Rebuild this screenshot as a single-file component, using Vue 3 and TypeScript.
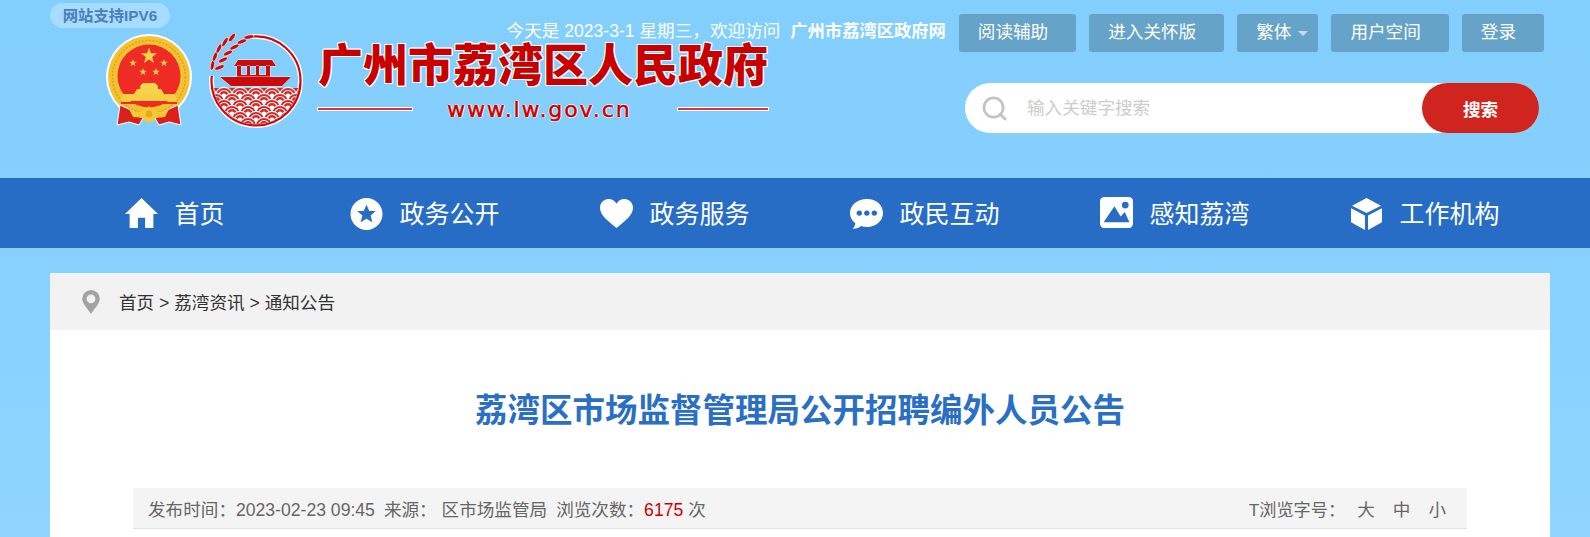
<template>
  <div class="page">
    <header class="header">
      <span class="ipv6">网站支持IPV6</span>
      <div class="brand">
        <!-- national emblem -->
        <svg class="emblem" viewBox="0 0 88 94" width="88" height="94">
          <circle cx="44" cy="44" r="43" fill="#fff" />
          <circle cx="44" cy="44" r="41" fill="#f2c230" />
          <circle cx="44" cy="44" r="36.5" fill="none" stroke="#e0a020" stroke-width="1.5" stroke-dasharray="2 1.5" />
          <circle cx="44" cy="43" r="31.5" fill="#ee2b24" />
          <polygon v-for="s in emblemStars" :key="s.x" :points="star(s.x, s.y, s.r)" fill="#f7d24a" />
          <path d="M29 61h30l-3-5h-3v-3l-3-3H38l-3 3v3h-3z" fill="#f7d24a" />
          <path d="M18 61h52l2 7H16z" fill="#f6cf45" />
          <path d="M16 69h56v2H16z" fill="#ee2b24" />
          <path d="M12 92 15 72l13 6 10 7-4 7-10-3z" fill="#d9201c" stroke="#fff" stroke-width="1" />
          <path d="M76 92 73 72l-13 6-10 7 4 7 10-3z" fill="#d9201c" stroke="#fff" stroke-width="1" />
          <path d="M24 76c8 5 14 4 20-3 6 7 12 8 20 3l-4 8c-6 1-10 0-11 3-2 3-8 3-10 0-1-3-5-2-11-3z" fill="#f6c935" />
          <circle cx="44" cy="81" r="3.4" fill="#e8a81f" />
        </svg>

        <!-- district logo -->
        <svg class="district" viewBox="0 0 95 95" width="95" height="95">
          <defs>
            <clipPath id="waveClip"><circle cx="48" cy="48" r="43" /></clipPath>
          </defs>
          <path d="M44 3.6A44.5 44.5 0 1 1 3.8 43" fill="none" stroke="#fff" stroke-width="5" />
          <path d="M44 3.6A44.5 44.5 0 1 1 3.8 43" fill="none" stroke="#cc0a0a" stroke-width="2.2" />
          <g clip-path="url(#waveClip)">
            <rect x="4" y="55" width="90" height="40" fill="#d42a2a" />
            <g v-for="w in waves" :key="w.id" fill="none">
              <circle :cx="w.x" :cy="w.y" r="8.6" fill="#d42a2a" stroke="#fff" stroke-width="1.2" />
              <circle :cx="w.x" :cy="w.y" r="5.5" stroke="#fff" stroke-width="1.2" />
              <circle :cx="w.x" :cy="w.y" r="2.4" fill="#fff" />
            </g>
          </g>
          <ellipse v-for="g in grains" :key="g.id" :cx="g.x" :cy="g.y" rx="5.2" ry="2" :transform="`rotate(${g.a} ${g.x} ${g.y})`" fill="#cc0a0a" stroke="#fff" stroke-width=".6" />
          <!-- boat -->
          <g class="boat">
            <path d="M26 33l4-6h34l4 6z" />
            <path d="M29 33h4v11h-4zM39 33h3v11h-3zM48 33h3v11h-3zM58 33h4v11h-4zM29 42h33v3H29z" />
            <path d="M12 44h71l-9 9H23z" />
          </g>
        </svg>

        <div class="brand-text">
          <div class="site-name">广州市荔湾区人民政府</div>
          <div class="site-url">
            <i class="rule rule-left"></i>
            <span>www.lw.gov.cn</span>
            <i class="rule rule-right"></i>
          </div>
        </div>
      </div>

      <div class="tools">
        <div class="top-row">
          <span class="welcome">今天是 2023-3-1 星期三，欢迎访问</span>
          <b class="welcome-site">广州市荔湾区政府网</b>
          <div class="btns">
            <a v-for="b in topButtons" :key="b" class="btn">{{ b }}<i v-if="b === '繁体'" class="caret"></i></a>
          </div>
        </div>
        <div class="search">
          <svg class="search-icon" viewBox="0 0 26 26" width="25" height="25">
            <circle cx="12" cy="12" r="10" fill="none" stroke="#c4c4c4" stroke-width="2.8" />
            <path d="M19 19l5 5" stroke="#c4c4c4" stroke-width="3" stroke-linecap="round" />
          </svg>
          <input class="search-input" placeholder="输入关键字搜索" />
          <button class="search-btn">搜索</button>
        </div>
      </div>
    </header>

    <nav class="nav">
      <a v-for="n in navItems" :key="n.label" class="nav-item">
        <svg class="nav-icon" viewBox="0 0 32 32" width="33" height="33" fill="#fff" v-html="n.icon"></svg>
        <span>{{ n.label }}</span>
      </a>
    </nav>

    <main class="card">
      <div class="crumbs">
        <svg class="pin" viewBox="0 0 18 24" width="18" height="24">
          <path fill-rule="evenodd" d="M9 0a8.8 8.8 0 0 1 8.8 8.8C17.800 14 12 19 9 24 6 19 .2 14 .2 8.800A8.800 8.800 0 0 1 9 0zm0 4.400a4.400 4.400 0 1 0 0 8.800 4.400 4.400 0 0 0 0-8.800z" fill="#a3a3a3" />
        </svg>
        <span>首页 &gt; 荔湾资讯 &gt; 通知公告</span>
      </div>
      <h1 class="title">荔湾区市场监督管理局公开招聘编外人员公告</h1>
      <div class="meta">
        <div class="meta-left">
          <span>发布时间：2023-02-23 09:45</span>
          <span>来源： 区市场监管局</span>
          <span>浏览次数：<em>6175</em> 次</span>
        </div>
        <div class="meta-right">
          <span class="size-label">T浏览字号：</span>
          <a>大</a><a>中</a><a>小</a>
        </div>
      </div>
    </main>
  </div>
</template>

<script setup lang="ts">
const topButtons = ['阅读辅助', '进入关怀版', '繁体', '用户空间', '登录']

const navItems = [
  {
    label: '首页',
    icon: '<path d="M16 1 32 16.500h-4.500V30H19.500V20h-7v10H4.500V16.500H0z"/>',
  },
  {
    label: '政务公开',
    icon: '<path fill-rule="evenodd" d="M16 1a15.500 15.500 0 1 1 0 31 15.500 15.500 0 0 1 0-31zm0 6.500-2.700 6H7l5 4.500-1.700 6.500 5.700-3.500 5.700 3.500L20 18l5-4.500h-6.300z"/>',
  },
  {
    label: '政务服务',
    icon: '<path d="M16 30C8 23.500 0 18 0 10.500 0 5.500 3.800 2 8.200 2 11.500 2 14.500 3.800 16 6.500 17.500 3.800 20.500 2 23.800 2 28.200 2 32 5.500 32 10.500 32 18 24 23.500 16 30z"/>',
  },
  {
    label: '政民互动',
    icon: '<path fill-rule="evenodd" d="M16.500 2C25.500 2 32 8 32 15.500S25.500 29 16.500 29c-2 0-4-.3-5.700-.9C9 29.500 6 31 2.500 30.800c1.500-1.300 2.600-3.300 2.700-5.300C2 23 0 19.500 0 15.500 0 8 7.500 2 16.500 2zM9 13a2.600 2.600 0 1 0 0 5.200A2.600 2.600 0 0 0 9 13zm7.300 0a2.600 2.600 0 1 0 0 5.200 2.600 2.600 0 0 0 0-5.200zm7.300 0a2.600 2.600 0 1 0 0 5.200 2.600 2.600 0 0 0 0-5.200z"/>',
  },
  {
    label: '感知荔湾',
    icon: '<path fill-rule="evenodd" d="M4 0h24a4 4 0 0 1 4 4v22a4 4 0 0 1-4 4H4a4 4 0 0 1-4-4V4a4 4 0 0 1 4-4zm20.500 4.500a3.300 3.300 0 1 0 0 6.600 3.300 3.300 0 0 0 0-6.600zM14 9 3.500 24.500h25L24 14.500l-4 4.500z"/>',
  },
  {
    label: '工作机构',
    icon: '<path d="M16 1 30 8.500 16 15.500 2 8.500zM1 11l13.500 7v14L1 24.500zM31 11l-13.500 7v14L31 24.500z"/>',
  },
]

const emblemStars = [
  { x: 44, y: 23, r: 8.5 },
  { x: 28, y: 30, r: 4 },
  { x: 59, y: 30, r: 4 },
  { x: 38, y: 39, r: 4 },
  { x: 51, y: 39, r: 4 },
]

// five pointed star around a centre
const star = (cx: number, cy: number, r: number) => {
  const pts: string[] = []
  for (let i = 0; i < 10; i++) {
    const rad = i % 2 === 0 ? r : r * 0.4
    const a = -Math.PI / 2 + (i * Math.PI) / 5
    pts.push(`${(cx + rad * Math.cos(a)).toFixed(2)},${(cy + rad * Math.sin(a)).toFixed(2)}`)
  }
  return pts.join(' ')
}

// rows of scale shaped waves, drawn top row first so lower rows overlap them
const waves: { id: string; x: number; y: number }[] = []
for (let row = 0; row < 6; row++) {
  const offset = row % 2 === 0 ? 0 : 8
  for (let col = 0; col < 7; col++) {
    waves.push({ id: `${row}-${col}`, x: offset + col * 16, y: 63 + row * 6 })
  }
}

// wheat ear in the upper left of the ring
const grains = [
  { id: 1, x: 4.5, y: 32, a: -80 },
  { id: 2, x: 11.500, y: 34.500, a: -20 },
  { id: 3, x: 7, y: 23.500, a: -70 },
  { id: 4, x: 15, y: 27, a: -25 },
  { id: 5, x: 11, y: 15.500, a: -65 },
  { id: 6, x: 20, y: 20, a: -25 },
  { id: 7, x: 17, y: 9, a: -60 },
  { id: 8, x: 26.500, y: 14, a: -25 },
  { id: 9, x: 24, y: 4.500, a: -55 },
  { id: 10, x: 34, y: 8.500, a: -20 },
  { id: 11, x: 41, y: 4, a: -10 },
]
</script>

<style scoped>
.page {
  position: relative;
  height: 537px;
  display: flex;
  flex-direction: column;
  font-family: "Liberation Sans", "Noto Sans CJK SC", sans-serif;
  background: linear-gradient(180deg, #82cefd 0%, #86d0fe 40%, #8fd5ff 100%);
}

.header {
  height: 178px;
  flex: none;
  display: flex;
  justify-content: space-between;
  padding: 0 46px 0 105px;
}

.ipv6 {
  position: absolute;
  left: 50px;
  top: 3px;
  width: 120px;
  height: 25px;
  line-height: 25px;
  text-align: center;
  border-radius: 13px;
  background: #a6dcff;
  color: #4a7fb9;
  font-size: 15.3px;
  font-weight: 700;
}

.brand {
  flex: none;
  display: flex;
  align-items: flex-start;
  padding-top: 33px;
  /* the welcome line sits above the site name, so the brand may run under the tools */
  margin-right: -400px;
}

.boat {
  fill: #cc0a0a;
  stroke: #fff;
  stroke-width: 0.8;
  paint-order: stroke;
}

.district {
  margin-left: 15px;
}

.brand-text {
  margin-left: 15px;
  width: 452px;
  padding-top: 13px;
}

.site-name {
  height: 42px;
  line-height: 42px;
  font-size: 45px;
  font-weight: 900;
  color: #c80000;
  white-space: nowrap;
  text-shadow: 1px 0 #fff, -1px 0 #fff, 0 1px #fff, 0 -1px #fff, 1px 1px #fff, -1px -1px #fff, 1px -1px #fff, -1px 1px #fff;
}

.site-url {
  display: flex;
  align-items: center;
  height: 30px;
  margin-top: 6px;
}

.site-url span {
  margin-left: 35px;
  width: 231px;
  font-family: "DejaVu Sans", sans-serif;
  font-size: 22px;
  letter-spacing: 1.9px;
  color: #c80000;
  -webkit-text-stroke: 0.5px #c80000;
  text-shadow: 1px 0 #fff, -1px 0 #fff, 0 1px #fff, 0 -1px #fff;
}

.rule {
  height: 2px;
  background: #d23a3a;
  box-shadow: 0 0 0 1px #fff;
}

.rule-left {
  width: 94px;
}

.rule-right {
  width: 90px;
}

.tools {
  display: flex;
  flex-direction: column;
  align-items: flex-end;
}

.top-row {
  display: flex;
  align-items: flex-start;
  height: 38px;
  margin-top: 14px;
  color: #fff;
  font-size: 17.6px;
  line-height: 24px;
  white-space: nowrap;
}

.welcome,
.welcome-site {
  margin-top: 5px;
}

.welcome-site {
  margin-left: 10px;
  font-size: 17.3px;
}

.btns {
  display: flex;
  gap: 13px;
  margin-left: 13px;
}

.btn {
  display: flex;
  align-items: center;
  height: 35px;
  padding: 0 28px 3px 19px;
  background: #65a3c9;
  border-radius: 3px;
  color: #fff;
}

.caret {
  width: 0;
  height: 0;
  margin: 3px -18px 0 7px;
  border: 5px solid transparent;
  border-top: 5px solid #c9dcea;
  border-bottom: 0;
}

.search {
  display: flex;
  align-items: center;
  width: 574px;
  height: 50px;
  margin-top: 31px;
  margin-right: 5px;
  background: #fff;
  border-radius: 25px;
}

.search-icon {
  margin-left: 17px;
  flex: none;
}

.search-input {
  flex: 1;
  min-width: 0;
  margin-left: 18px;
  border: 0;
  outline: 0;
  background: transparent;
  font-family: inherit;
  font-size: 17.6px;
}

.search-input::placeholder {
  color: #cccccc;
}

.search-btn {
  flex: none;
  width: 117px;
  height: 50px;
  border: 0;
  border-radius: 25px;
  background: #d0251e;
  color: #fff;
  font-family: inherit;
  font-size: 17.6px;
  font-weight: 700;
}

.nav {
  flex: none;
  height: 70px;
  padding: 0 40px 0 50px;
  display: grid;
  grid-template-columns: repeat(6, 1fr);
  background: #276dc5;
}

.nav-item {
  display: flex;
  align-items: center;
  justify-content: center;
  gap: 16px;
  color: #fff;
  font-size: 25px;
}

.nav-item span {
  margin-bottom: 3px;
}

.nav-icon {
  flex: none;
}

.card {
  flex: 1;
  min-height: 0;
  margin: 25px 40px 0 50px;
  background: #fff;
}

.crumbs {
  display: flex;
  align-items: center;
  height: 57px;
  padding-left: 32px;
  background: #f2f2f2;
  color: #333;
  font-size: 17.6px;
}

.pin {
  margin-right: 19px;
}

.title {
  margin: 0;
  padding-top: 58px;
  height: 100px;
  box-sizing: content-box;
  text-align: center;
  font-size: 32.5px;
  line-height: 47px;
  font-weight: 700;
  color: #2a6fc4;
}

.meta {
  display: flex;
  justify-content: space-between;
  align-items: center;
  height: 40px;
  margin: 0 83px;
  padding: 0 21px 0 15px;
  background: #f4f4f4;
  border-bottom: 1px solid #e3e3e3;
  color: #666;
  font-size: 17.6px;
  white-space: nowrap;
}

.meta-left {
  display: flex;
  gap: 9px;
}

.meta em {
  font-style: normal;
  color: #cc0000;
}

.meta-right {
  display: flex;
  gap: 18px;
}

.size-label {
  margin-right: -6px;
  font-size: 17.2px;
}

.meta-right a {
  color: #666;
}
</style>

<style>
html,
body {
  margin: 0;
  overflow: hidden;
}
</style>
